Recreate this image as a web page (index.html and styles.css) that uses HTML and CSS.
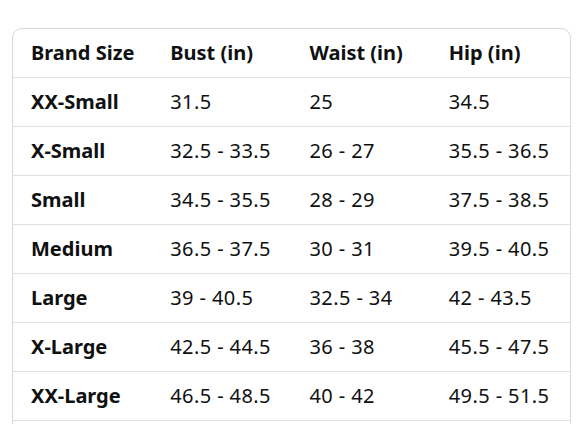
FILE: index.html
```html
<!DOCTYPE html>
<html>
<head>
<meta charset="utf-8">
<link rel="stylesheet" href="styles.css">
</head>
<body>
<div class="page">
  <div class="clip">
    <div class="card">
      <table class="size-table">
        <thead>
          <tr><th>Brand Size</th><th>Bust (in)</th><th>Waist (in)</th><th>Hip (in)</th></tr>
        </thead>
        <tbody>
          <tr><th>XX-Small</th><td>31.5</td><td>25</td><td>34.5</td></tr>
          <tr><th>X-Small</th><td>32.5 - 33.5</td><td>26 - 27</td><td>35.5 - 36.5</td></tr>
          <tr><th>Small</th><td>34.5 - 35.5</td><td>28 - 29</td><td>37.5 - 38.5</td></tr>
          <tr><th>Medium</th><td>36.5 - 37.5</td><td>30 - 31</td><td>39.5 - 40.5</td></tr>
          <tr><th>Large</th><td>39 - 40.5</td><td>32.5 - 34</td><td>42 - 43.5</td></tr>
          <tr><th>X-Large</th><td>42.5 - 44.5</td><td>36 - 38</td><td>45.5 - 47.5</td></tr>
          <tr><th>XX-Large</th><td>46.5 - 48.5</td><td>40 - 42</td><td>49.5 - 51.5</td></tr>
          <tr><th>&nbsp;</th><td></td><td></td><td></td></tr>
        </tbody>
      </table>
    </div>
  </div>
</div>
</body>
</html>
```

FILE: styles.css
```css
html, body {
  margin: 0;
  padding: 0;
  background: #ffffff;
}
.page {
  padding: 28px 17px 0 12px;
  font-family: "Noto Sans", "Liberation Sans", sans-serif;
  color: #0f1111;
}
.clip {
  height: 396px;
  overflow: hidden;
}
.card {
  border: 1px solid #d5d9d9;
  border-radius: 10px;
  overflow: hidden;
}
.size-table {
  width: 100%;
  border-collapse: collapse;
  table-layout: fixed;
}
.size-table th,
.size-table td {
  height: 48px;
  padding: 0 0 0 18px;
  text-align: left;
  vertical-align: middle;
  font-size: 20px;
  line-height: 24px;
  white-space: nowrap;
  border-bottom: 1px solid #dfe2e2;
  box-sizing: content-box;
}
.size-table th {
  font-weight: 700;
}
.size-table td {
  font-weight: 400;
  letter-spacing: 0.4px;
}
```
